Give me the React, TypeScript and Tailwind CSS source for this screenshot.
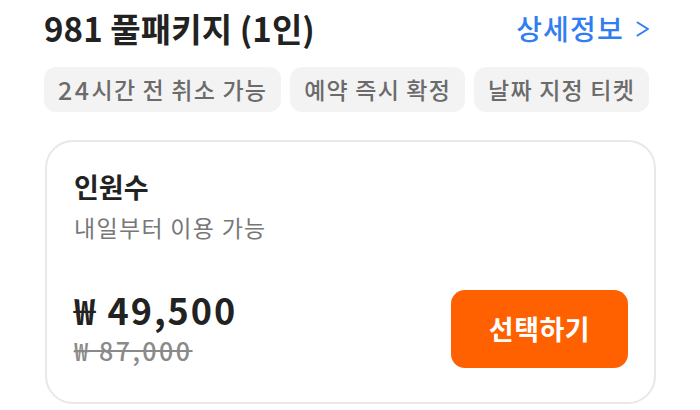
const font = { fontFamily: '"Noto Sans CJK KR", "Noto Sans", sans-serif' };

const tags = [
  <><span className="text-[25px] tracking-[2.5px]">24</span>시간 전 취소 가능</>,
  '예약 즉시 확정',
  '날짜 지정 티켓',
];

export default function App() {
  return (
    <div style={font} className="w-[700px] h-[410px] bg-white pl-[44px] pr-[45px] pt-[6px] overflow-hidden">
      {/* header */}
      <div className="flex items-center justify-between h-[44px]">
        <h1 className="text-[33px] font-bold text-[#222] tracking-[0.1px] leading-none">981 풀패키지 (1인)</h1>
        <a className="flex items-center gap-[12px] mr-[5px] text-[28px] font-medium text-[#2f7ef2] tracking-[1.2px] leading-none">
          상세정보
          <svg width="14" height="16" viewBox="0 0 14 16" fill="none" stroke="currentColor" strokeWidth="2" strokeLinecap="round" strokeLinejoin="round" className="mt-[2px]">
            <polyline points="1.5,1.5 12,8 1.5,14.5" />
          </svg>
        </a>
      </div>

      {/* tags */}
      <div className="flex gap-[9px] mt-[17px]">
        {tags.map((t, i) => (
          <span
            key={i}
            className="shrink-0 whitespace-nowrap h-[45px] px-[14px] flex items-center rounded-[12px] bg-[#f3f3f3] text-[23px] font-medium text-[#6b6b6b] tracking-[1.2px] leading-none"
          >
            {t}
          </span>
        ))}
      </div>

      {/* card */}
      <div className="mt-[28px] ml-px w-[611px] h-[264px] border-2 border-[#e8e8e8] rounded-[28px] pl-[27px] pr-[26px] pt-[28px]">
        <p className="text-[27px] font-bold text-[#222] leading-[34px]">인원수</p>
        <p className="mt-[8px] text-[23px] text-[#777] tracking-[1.3px] leading-[30px]">내일부터 이용 가능</p>

        <div className="mt-[42px] flex items-center justify-between">
          <div>
            <p className="text-[36px] font-bold text-[#222] tracking-[2px] leading-[42px]">₩ 49,500</p>
            <p className="mt-[6px] text-[25px] font-medium text-[#8a8a8a] tracking-[2.5px] line-through leading-[28px]">₩ 87,000</p>
          </div>
          <button className="w-[177px] h-[78px] mt-[6px] rounded-[14px] bg-[#ff6000] text-white text-[27px] font-semibold tracking-[0.5px]">
            선택하기
          </button>
        </div>
      </div>
    </div>
  );
}
